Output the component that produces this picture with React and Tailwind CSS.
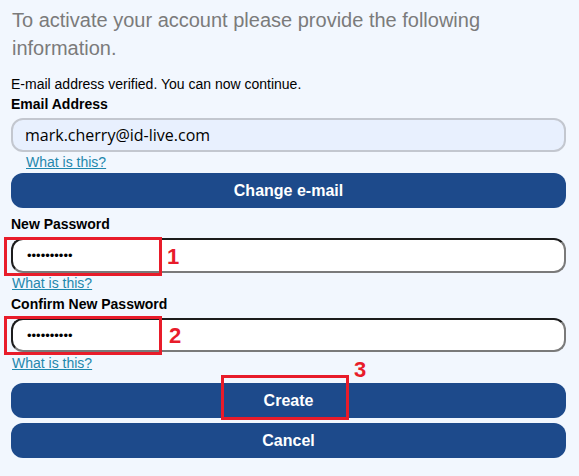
import React from 'react'

const Label = ({ children, className = '' }) => (
  <div className={`text-[14px] leading-[20px] font-bold text-black ${className}`}>{children}</div>
)

const HelpLink = ({ className = '' }) => (
  <div className={`text-[14px] leading-[16px] ${className}`}>
    <a href="#" className="text-[#1f87ad] underline">What is this?</a>
  </div>
)

const Button = ({ children, className = '' }) => (
  <button className={`block w-full h-[35px] rounded-[12px] bg-[#1d4a8b] text-white text-[16px] font-bold ${className}`}>
    {children}
  </button>
)

const PasswordInput = ({ className = '' }) => (
  <input
    type="password"
    readOnly
    value="xxxxxxxxxx"
    className={`block w-full bg-white rounded-[12px] border-2 border-[#7a7a7a] border-t-[#1c1c1c] border-l-[#1c1c1c] pl-[14px] text-[13px] outline-none ${className}`}
  />
)

// red annotation marks drawn over the form
const Mark = ({ box, num, numPos }) => (
  <>
    <div className={`absolute border-[3px] border-[#e81c2a] ${box}`} />
    <div className={`absolute text-[22px] leading-none font-semibold text-[#e81c2a] ${numPos}`}>{num}</div>
  </>
)

const App = () => {
  return (
    <div className="relative w-[579px] h-[476px] bg-[#f2f7fe] font-['Liberation_Sans',Arial,sans-serif] overflow-hidden">
      <div className="pl-[11px] pr-[13px] pt-[6px]">
        <h1 className="pl-[1px] text-[20px] leading-[28px] text-[#7b7b7b]">
          To activate your account please provide the following information.
        </h1>

        <p className="mt-[12px] text-[14px] leading-[20px] text-black">E-mail address verified. You can now continue.</p>
        <Label>Email Address</Label>
        <div className="mt-[4px] h-[34px] flex items-center rounded-[12px] bg-[#e8f0fe] border-2 border-[#c3c7cf] pl-[12px] font-['Open_Sans',sans-serif] text-[16px] text-black">
          mark.cherry@id-live.com
        </div>
        <HelpLink className="mt-[2px] ml-[15px]" />
        <Button className="mt-[3px]">Change e-mail</Button>

        <Label className="mt-[6px]">New Password</Label>
        <PasswordInput className="mt-[4px] h-[35px]" />
        <HelpLink className="mt-[2px] pl-[1px]" />

        <Label className="mt-[3px]">Confirm New Password</Label>
        <PasswordInput className="mt-[4px] h-[34px]" />
        <HelpLink className="mt-[3px] pl-[1px]" />

        <Button className="mt-[12px]">Create</Button>
        <Button className="mt-[5px]">Cancel</Button>
      </div>

      <Mark box="left-[4px] top-[237px] w-[158px] h-[39px]" num="1" numPos="left-[167px] top-[246px]" />
      <Mark box="left-[4px] top-[316px] w-[158px] h-[39px]" num="2" numPos="left-[169px] top-[325px]" />
      <Mark box="left-[221px] top-[375px] w-[128px] h-[45px]" num="3" numPos="left-[354px] top-[359px]" />
    </div>
  )
}

export default App
